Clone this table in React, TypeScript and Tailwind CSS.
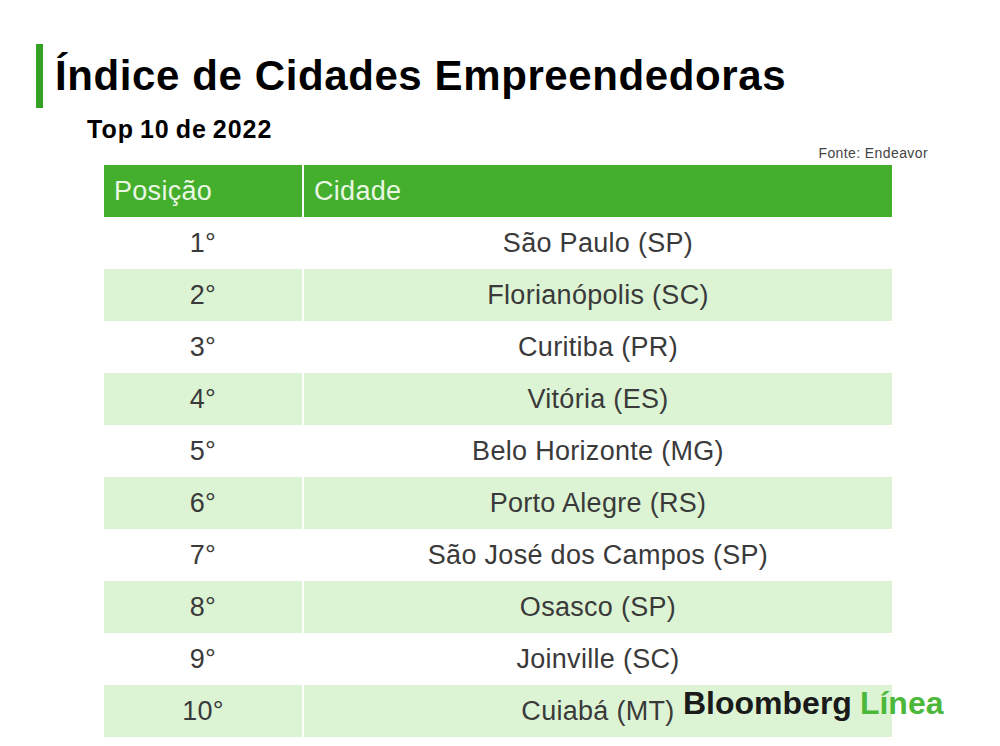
const rows: [string, string][] = [
  ["1°", "São Paulo (SP)"],
  ["2°", "Florianópolis (SC)"],
  ["3°", "Curitiba (PR)"],
  ["4°", "Vitória (ES)"],
  ["5°", "Belo Horizonte (MG)"],
  ["6°", "Porto Alegre (RS)"],
  ["7°", "São José dos Campos (SP)"],
  ["8°", "Osasco (SP)"],
  ["9°", "Joinville (SC)"],
  ["10°", "Cuiabá (MT)"],
];

export default function App() {
  return (
    <div className="relative w-[1000px] h-[746px] bg-white overflow-hidden font-['Liberation_Sans',Arial,sans-serif]">
      {/* Title */}
      <div className="flex items-center pt-[44px] pl-[36px]">
        <div className="w-[7px] h-[64px] bg-[#34a024]" />
        <h1 className="ml-[12px] text-[42px] font-bold tracking-[0.6px] text-black leading-none">
          Índice de Cidades Empreendedoras
        </h1>
      </div>
      <div className="pl-[87px] mt-[9px] text-[25px] font-bold tracking-[1px] [word-spacing:-2px] text-black leading-none">
        Top 10 de 2022
      </div>
      <div className="flex justify-end pr-[72px] mt-[4px] text-[14px] text-[#444] tracking-[0.4px] leading-none">
        Fonte: Endeavor
      </div>

      {/* Table */}
      <div className="ml-[104px] mt-[5px] w-[788px]">
        <div className="flex h-[52px] bg-[#44ae2d] text-[#eaf7e4] text-[27px] tracking-[0.3px]">
          <div className="w-[200px] flex items-center pl-[10px] border-r-2 border-white">
            Posição
          </div>
          <div className="flex-1 flex items-center pl-[10px]">Cidade</div>
        </div>
        {rows.map(([pos, city], i) => (
          <div
            key={pos}
            className={
              i % 2 === 1
                ? "flex h-[52px] bg-[#dcf4d4] text-[#3a3a3a] text-[27px] tracking-[0.3px]"
                : "flex h-[52px] bg-white text-[#3a3a3a] text-[27px] tracking-[0.3px]"
            }
          >
            <div className="w-[200px] flex items-center justify-center border-r-2 border-white">
              {pos}
            </div>
            <div className="flex-1 flex items-center justify-center">{city}</div>
          </div>
        ))}
      </div>

      {/* Logo */}
      <div className="absolute left-[683px] top-[687px] flex items-baseline gap-[8px] text-[32px] font-bold leading-none">
        <span className="text-[#1a1a1a]">Bloomberg</span>
        <span className="text-[#4cb83a]">Línea</span>
      </div>
    </div>
  );
}
